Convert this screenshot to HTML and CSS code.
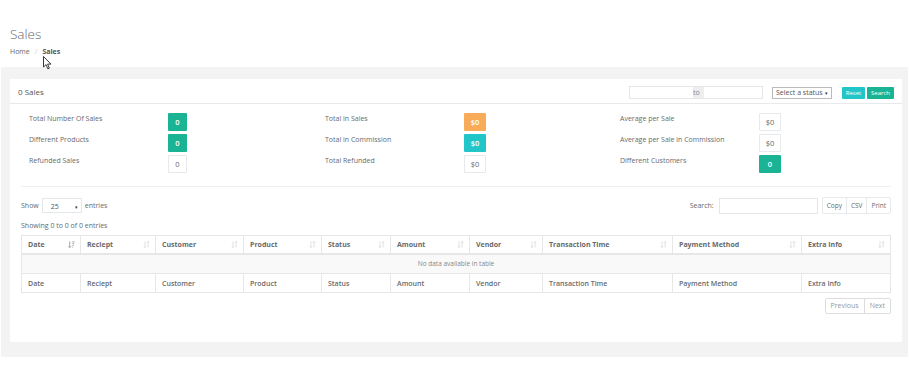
FILE: index.html
```html
<!DOCTYPE html>
<html lang="en">
<head>
  <meta charset="UTF-8" />
  <title>Sales</title>
  <link rel="stylesheet" href="styles.css">
</head>
<body>
  <div class="page-heading">
    <h2>Sales</h2>
    <ol class="breadcrumb">
      <li>Home</li>
      <li class="sep">/</li>
      <li class="active">Sales</li>
    </ol>
  </div>

  <svg class="cursor" width="9" height="14" viewBox="0 0 9 14"><path d="M0.5 0.5 L0.5 11 L3 8.6 L4.8 12.8 L6.3 12.2 L4.6 8.1 L8 8.1 Z" fill="#fff" stroke="#222" stroke-width="0.9" stroke-linejoin="round"/></svg>

  <div class="wrapper">
    <div class="ibox">
      <div class="ibox-title">
        <h5>0 Sales</h5>
        <div class="tools">
          <div class="daterange">
            <input type="text" class="d1">
            <span class="addon">to</span>
            <input type="text" class="d2">
          </div>
          <div class="select status">Select a status <span class="caret">&#9662;</span></div>
          <button class="btn btn-info">Reset</button>
          <button class="btn btn-primary">Search</button>
        </div>
      </div>

      <div class="ibox-content">
        <div class="stats">
          <div class="stat-col">
            <div class="stat"><span class="label">Total Number Of Sales</span><span class="badge green">0</span></div>
            <div class="stat"><span class="label">Different Products</span><span class="badge green">0</span></div>
            <div class="stat"><span class="label">Refunded Sales</span><span class="badge plain">0</span></div>
          </div>
          <div class="stat-col">
            <div class="stat"><span class="label">Total in Sales</span><span class="badge orange wide">$0</span></div>
            <div class="stat"><span class="label">Total in Commission</span><span class="badge teal wide">$0</span></div>
            <div class="stat"><span class="label">Total Refunded</span><span class="badge plain wide">$0</span></div>
          </div>
          <div class="stat-col">
            <div class="stat"><span class="label">Average per Sale</span><span class="badge plain wide">$0</span></div>
            <div class="stat"><span class="label">Average per Sale in Commission</span><span class="badge plain wide">$0</span></div>
            <div class="stat"><span class="label">Different Customers</span><span class="badge green wide">0</span></div>
          </div>
        </div>

        <hr>

        <div class="toolbar">
          <div class="length">Show <div class="select len">25 <span class="caret">&#9662;</span></div> entries</div>
          <div class="filter">
            Search: <input type="text" class="search-input">
            <div class="btn-group">
              <span>Copy</span><span>CSV</span><span>Print</span>
            </div>
          </div>
        </div>

        <div class="info">Showing 0 to 0 of 0 entries</div>

        <table class="grid">
          <thead>
            <tr>
              <th style="width:59px">Date<svg class="sort on" viewBox="0 0 8 8"><path d="M2 0.5V7.5M0.5 6L2 7.5L3.5 6M5 1H7.5M5 3H7M5 5H6.5M5 7H6" stroke="currentColor" stroke-width="1" fill="none"/></svg></th>
              <th style="width:75px">Reciept<svg class="sort" viewBox="0 0 8 8"><path d="M2.2 0.5V7.5M0.8 6L2.2 7.5L3.6 6M5.8 7.5V0.5M4.4 2L5.8 0.5L7.2 2" stroke="currentColor" stroke-width="1" fill="none"/></svg></th>
              <th style="width:88px">Customer<svg class="sort" viewBox="0 0 8 8"><path d="M2.2 0.5V7.5M0.8 6L2.2 7.5L3.6 6M5.8 7.5V0.5M4.4 2L5.8 0.5L7.2 2" stroke="currentColor" stroke-width="1" fill="none"/></svg></th>
              <th style="width:78px">Product<svg class="sort" viewBox="0 0 8 8"><path d="M2.2 0.5V7.5M0.8 6L2.2 7.5L3.6 6M5.8 7.5V0.5M4.4 2L5.8 0.5L7.2 2" stroke="currentColor" stroke-width="1" fill="none"/></svg></th>
              <th style="width:69px">Status<svg class="sort" viewBox="0 0 8 8"><path d="M2.2 0.5V7.5M0.8 6L2.2 7.5L3.6 6M5.8 7.5V0.5M4.4 2L5.8 0.5L7.2 2" stroke="currentColor" stroke-width="1" fill="none"/></svg></th>
              <th style="width:79px">Amount<svg class="sort" viewBox="0 0 8 8"><path d="M2.2 0.5V7.5M0.8 6L2.2 7.5L3.6 6M5.8 7.5V0.5M4.4 2L5.8 0.5L7.2 2" stroke="currentColor" stroke-width="1" fill="none"/></svg></th>
              <th style="width:73px">Vendor<svg class="sort" viewBox="0 0 8 8"><path d="M2.2 0.5V7.5M0.8 6L2.2 7.5L3.6 6M5.8 7.5V0.5M4.4 2L5.8 0.5L7.2 2" stroke="currentColor" stroke-width="1" fill="none"/></svg></th>
              <th style="width:130px">Transaction Time<svg class="sort" viewBox="0 0 8 8"><path d="M2.2 0.5V7.5M0.8 6L2.2 7.5L3.6 6M5.8 7.5V0.5M4.4 2L5.8 0.5L7.2 2" stroke="currentColor" stroke-width="1" fill="none"/></svg></th>
              <th style="width:129px">Payment Method<svg class="sort" viewBox="0 0 8 8"><path d="M2.2 0.5V7.5M0.8 6L2.2 7.5L3.6 6M5.8 7.5V0.5M4.4 2L5.8 0.5L7.2 2" stroke="currentColor" stroke-width="1" fill="none"/></svg></th>
              <th>Extra Info<svg class="sort" viewBox="0 0 8 8"><path d="M2.2 0.5V7.5M0.8 6L2.2 7.5L3.6 6M5.8 7.5V0.5M4.4 2L5.8 0.5L7.2 2" stroke="currentColor" stroke-width="1" fill="none"/></svg></th>
            </tr>
          </thead>
          <tbody>
            <tr><td colspan="10" class="empty">No data available in table</td></tr>
          </tbody>
          <tfoot>
            <tr>
              <th>Date</th><th>Reciept</th><th>Customer</th><th>Product</th><th>Status</th>
              <th>Amount</th><th>Vendor</th><th>Transaction Time</th><th>Payment Method</th><th>Extra Info</th>
            </tr>
          </tfoot>
        </table>

        <div class="paging">
          <div class="pagination">
            <span>Previous</span><span>Next</span>
          </div>
        </div>
      </div>
    </div>
  </div>
</body>
</html>
```

FILE: styles.css
```css
* {
  box-sizing: border-box;
}
body {
  margin: 0;
  font-family: "Open Sans", "Liberation Sans", sans-serif;
  font-size: 7px;
  color: #676a6c;
  background: #fff;
  position: relative;
}
.page-heading {
  height: 67px;
  padding: 24px 10px 0;
}
.page-heading h2 {
  margin: 0;
  font-size: 13.5px;
  font-weight: 300;
  line-height: 20px;
}
.breadcrumb {
  list-style: none;
  margin: 3px 0 0;
  padding: 0;
  display: flex;
  gap: 5px;
  font-size: 7px;
  line-height: 10px;
}
.breadcrumb .sep {
  color: #ccc;
}
.breadcrumb .active {
  font-weight: 700;
  color: #555;
}
.cursor {
  position: absolute;
  left: 43px;
  top: 56px;
}
.wrapper {
  background: #f3f3f4;
  margin: 0 1px;
  padding: 12px 6px 15px 9px;
}
.ibox {
  background: #fff;
}
.ibox-title {
  height: 25px;
  border-bottom: 1px solid #e7eaec;
  padding: 0 8px;
  display: flex;
  align-items: center;
  justify-content: space-between;
}
.ibox-title h5 {
  margin: 0;
  font-size: 8px;
  font-weight: 400;
  color: #555;
}
.tools {
  display: flex;
  align-items: center;
  margin-top: 3px;
}
.daterange {
  display: flex;
  height: 13px;
  border: 1px solid #e5e6e7;
}
.daterange input {
  border: none;
  height: 11px;
  padding: 0;
  outline: none;
}
.daterange .d1 {
  width: 63px;
}
.daterange .d2 {
  width: 58px;
}
.addon {
  width: 11px;
  background: #eee;
  font-size: 7px;
  line-height: 11px;
  color: #888;
}
.select {
  display: flex;
  align-items: center;
  justify-content: space-between;
  border: 1px solid #aaa;
  background: #fff;
  color: #555;
  font-size: 7px;
  padding: 0 3px;
}
.status {
  width: 60px;
  height: 12px;
  margin-left: 9px;
  border-color: #bbb;
}
.caret {
  font-size: 5px;
  color: #333;
}
.btn {
  border: none;
  height: 12px;
  padding: 0 3px;
  font-family: inherit;
  font-size: 6px;
  color: #fff;
  border-radius: 1px;
}
.btn-info {
  background: #23c6c8;
  margin-left: 10px;
  width: 23px;
}
.btn-primary {
  background: #1ab394;
  margin-left: 2px;
  width: 27px;
}
.ibox-content {
  padding: 9px 11px 28px;
}
.stats {
  display: grid;
  grid-template-columns: 296px 295px 1fr;
  padding-left: 8px;
}
.stat-col {
  display: flex;
  flex-direction: column;
  gap: 3px;
}
.stat {
  display: flex;
  align-items: flex-start;
}
.stat .label {
  width: 139px;
  padding-top: 2px;
  line-height: 8px;
  font-size: 7px;
}
.badge {
  display: inline-flex;
  align-items: center;
  justify-content: center;
  width: 19px;
  height: 18px;
  font-size: 7.5px;
  font-weight: 600;
  color: #fff;
  border-radius: 1px;
}
.badge.wide {
  width: 22px;
}
.green {
  background: #1ab394;
}
.orange {
  background: #f8ac59;
}
.teal {
  background: #23c6c8;
}
.plain {
  background: #fff;
  border: 1px solid #e7eaec;
  color: #676a6c;
  font-weight: 400;
}
hr {
  border: none;
  border-top: 1px solid #eeeeee;
  margin: 13px 0 10px;
}
.toolbar {
  display: flex;
  align-items: center;
  justify-content: space-between;
  height: 17px;
}
.length {
  display: flex;
  align-items: center;
  gap: 3px;
}
.len {
  width: 40px;
  height: 15px;
  border-color: #e5e6e7;
  padding: 2px 3px 0 8px;
  font-size: 7px;
}
.filter {
  display: flex;
  align-items: center;
}
.search-input {
  width: 99px;
  height: 16px;
  margin-left: 5px;
  border: 1px solid #e5e6e7;
  outline: none;
}
.btn-group {
  display: flex;
  margin-left: 4px;
  border: 1px solid #e7eaec;
  border-radius: 2px;
}
.btn-group span {
  height: 15px;
  line-height: 15px;
  padding: 0 4px;
  font-size: 6.5px;
  border-left: 1px solid #e7eaec;
}
.btn-group span:first-child {
  border-left: none;
}
.info {
  margin-top: 7px;
  line-height: 10px;
  height: 14px;
}
.grid {
  width: 100%;
  border-collapse: collapse;
  border: 1px solid #e7e7e7;
  table-layout: fixed;
}
.grid th {
  text-align: left;
  font-weight: 700;
  font-size: 7px;
  color: #676a6c;
  padding: 0 6px;
  border: 1px solid #e7e7e7;
  position: relative;
}
.grid thead th {
  height: 18px;
  border-bottom: 2px solid #e7e7e7;
}
.grid tfoot th {
  height: 19px;
  font-weight: 600;
}
.sort {
  position: absolute;
  right: 5px;
  top: 5px;
  width: 7px;
  height: 7px;
  color: #dcdcdc;
}
.sort.on {
  color: #999;
}
.grid td.empty {
  height: 20px;
  background: #f9f9f9;
  text-align: center;
  font-size: 6.5px;
  color: #888;
}
.paging {
  display: flex;
  justify-content: flex-end;
  margin-top: 5px;
}
.pagination {
  display: flex;
  border: 1px solid #ddd;
  border-radius: 2px;
}
.pagination span {
  height: 14px;
  line-height: 14px;
  padding: 0 5px;
  font-size: 7px;
  color: #999;
}
.pagination span + span {
  border-left: 1px solid #ddd;
}
```
